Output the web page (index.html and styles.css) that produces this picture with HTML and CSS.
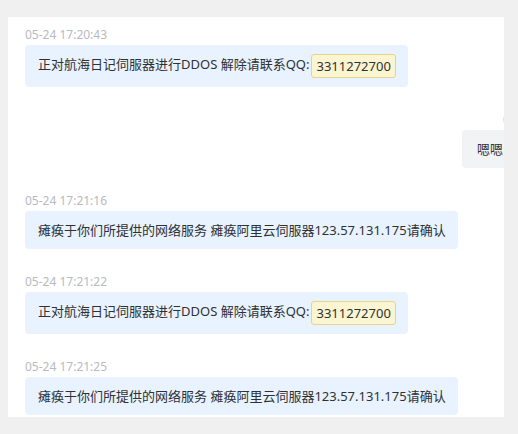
FILE: index.html
```html
<!DOCTYPE html>
<html lang="zh-CN">
<head>
    <meta charset="UTF-8">
    <meta name="viewport" content="width=device-width, initial-scale=1.0">
    <title>消息记录</title>
    <link rel="stylesheet" href="styles.css">
</head>
<body>

<div class="chat-panel">
    <div class="message-list">
        <div class="message left">
            <div class="time">05-24 17:20:43</div>
            <div class="bubble">正对航海日记伺服器进行DDOS 解除请联系QQ:<span class="qq">3311272700</span></div>
        </div>

        <div class="message right">
            <div class="time">05-24 17:20:58</div>
            <div class="bubble">嗯嗯</div>
        </div>

        <div class="message left">
            <div class="time">05-24 17:21:16</div>
            <div class="bubble">瘫痪于你们所提供的网络服务 瘫痪阿里云伺服器123.57.131.175请确认</div>
        </div>

        <div class="message left">
            <div class="time">05-24 17:21:22</div>
            <div class="bubble">正对航海日记伺服器进行DDOS 解除请联系QQ:<span class="qq">3311272700</span></div>
        </div>

        <div class="message left">
            <div class="time">05-24 17:21:25</div>
            <div class="bubble">瘫痪于你们所提供的网络服务 瘫痪阿里云伺服器123.57.131.175请确认</div>
        </div>
    </div>
</div>

</body>
</html>
```

FILE: styles.css
```css
body {
    margin: 0;
    background: #f0f0f0;
    font-family: "Noto Sans", "Noto Sans CJK SC", sans-serif;
    color: #303133;
}

.chat-panel {
    margin: 17px 0 0 8px;
    width: 496px;
    height: 400px;
    background: #fff;
    overflow: hidden;
}

.message-list {
    width: 493px;
    padding: 10px 17px 0;
}

.message {
    display: flex;
    flex-direction: column;
    align-items: flex-start;
    margin-bottom: 25px;
}

.message.right {
    align-items: flex-end;
}

.time {
    font-size: 12px;
    line-height: 16px;
    color: #b8babe;
    margin-bottom: 2px;
}

.message.right .time {
    margin-right: -67px;
}

.bubble {
    font-size: 13px;
    line-height: 20px;
    padding: 9px 12px 9px 13px;
    border-radius: 4px;
    background: #e8f3ff;
}

.message.right .bubble {
    background: #f2f3f5;
    padding: 9px 15px;
}

.qq {
    display: inline-block;
    vertical-align: middle;
    line-height: 20px;
    padding: 1px 4px;
    margin-left: 2px;
    background: #fbf5d2;
    border: 1px solid #e4d48e;
    border-radius: 3px;
}
```
